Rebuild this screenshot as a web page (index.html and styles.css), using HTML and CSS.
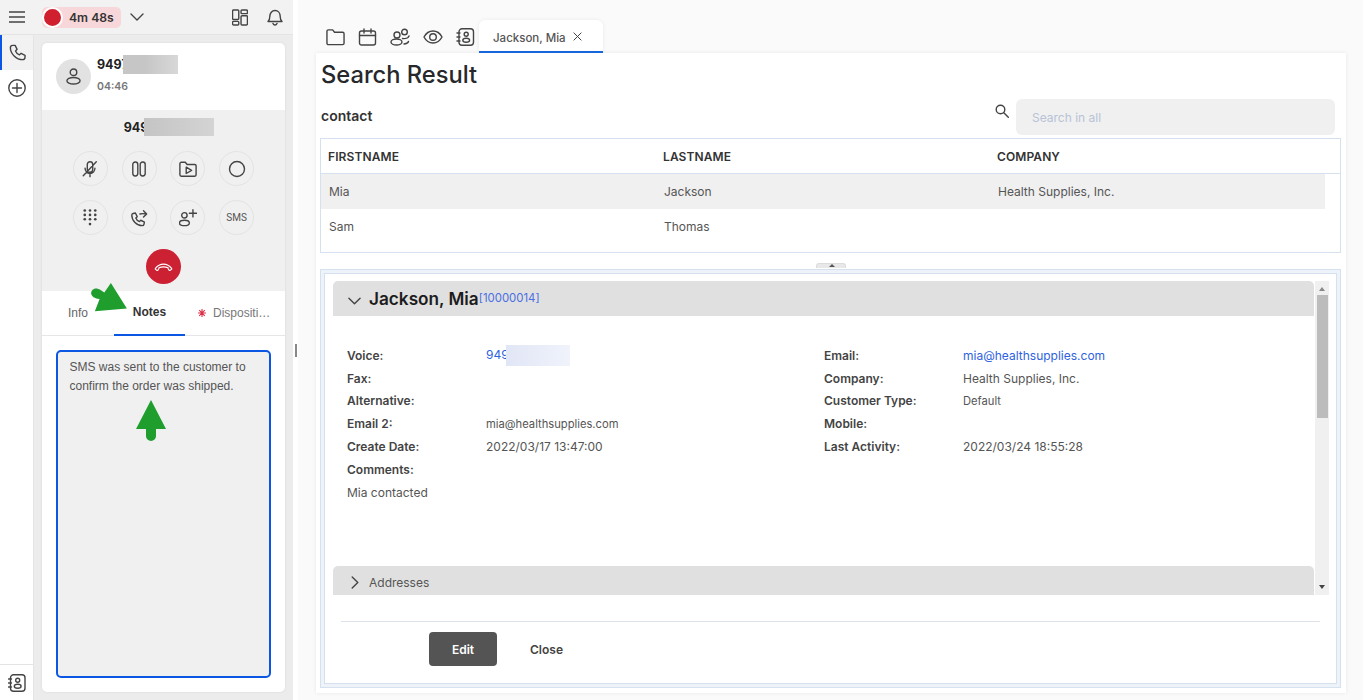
FILE: index.html
```html
<!DOCTYPE html>
<html lang="en">
<head>
<meta charset="utf-8">
<title>Search Result</title>
<link rel="stylesheet" href="styles.css">
</head>
<body>
<div class="app">
  <aside class="left">
    <header class="topbar">
      <svg class="ic menu" viewBox="0 0 16 12"><path d="M0 1h16M0 6h16M0 11h16"/></svg>
      <div class="timer"><span class="rec"></span><span class="timer-text">4m 48s</span></div>
      <svg class="ic chev" viewBox="0 0 14 8"><path d="M1 1l6 6 6-6"/></svg>
      <span class="spacer"></span>
      <svg class="ic layout" viewBox="0 0 17 17"><rect x=".6" y=".6" width="6.6" height="10" rx="1"/><rect x=".6" y="12.6" width="6.6" height="3.8" rx="1"/><rect x="9.6" y=".6" width="6.8" height="3.8" rx="1"/><rect x="9.6" y="6.6" width="6.8" height="9.8" rx="1"/></svg>
      <svg class="ic bell" viewBox="0 0 16 17"><path d="M1 12.5c1.4-1.2 1.8-2.5 1.8-5C2.8 4 5 1.5 8 1.5s5.200 2.500 5.200 6c0 2.500.4 3.800 1.800 5zM6 14.500c.4 1 1.100 1.500 2 1.500s1.600-.5 2-1.500"/></svg>
    </header>
    <div class="leftbody">
      <nav class="rail">
        <div class="rail-item active">
          <svg class="ic phone" viewBox="0 0 24 24"><path d="M6 3l3 0 2.500 5-2 2c.8 2.200 2.800 4.200 5 5l2-2 5 2.500 0 2.500c0 2-1.500 3-3 3C10.500 21 3 13.500 3 6c0-1.500 1-3 3-3z"/></svg>
        </div>
        <div class="rail-item">
          <svg class="ic plus" viewBox="0 0 18 18"><circle cx="9" cy="9" r="8.200"/><path d="M9 4.500v9M4.500 9h9"/></svg>
        </div>
        <span class="spacer"></span>
        <div class="rail-foot">
          <svg class="ic book" viewBox="0 0 18 18"><rect x="2.500" y=".8" width="14.500" height="16.400" rx="3"/><circle cx="9.700" cy="6.300" r="2"/><ellipse cx="9.700" cy="12.300" rx="3.400" ry="2"/><path d="M.5 5h3M.5 9h3M.5 13h3"/></svg>
        </div>
      </nav>
      <div class="gutter">
        <section class="card">
          <div class="caller">
            <div class="avatar">
              <svg class="ic" viewBox="0 0 16 18"><circle cx="8" cy="4.500" r="3.500"/><ellipse cx="8" cy="13.500" rx="7" ry="3.500"/></svg>
            </div>
            <div class="caller-info">
              <div class="caller-num">9497<span class="blur blur-a"></span></div>
              <div class="caller-time">04:46</div>
            </div>
          </div>
          <div class="controls">
            <div class="dial-num">949<span class="blur blur-b"></span></div>
            <div class="btn-grid">
              <button class="round"><svg class="ic" viewBox="0 0 20 20"><path d="M7 5a3 3 0 0 1 6 0v5.500a3 3 0 0 1-6 0zM4.500 9c0 3.500 2.500 6 5.500 6s5.500-2.500 5.500-6M10 15v3.500M2.500 17.500L17 2"/></svg></button>
              <button class="round"><svg class="ic" viewBox="-1 -1 18 18"><rect x="1.800" y="1" width="5" height="14" rx="2.400"/><rect x="9.200" y="1" width="5" height="14" rx="2.400"/></svg></button>
              <button class="round"><svg class="ic" viewBox="0 0 20 18"><path d="M1 3a1.500 1.500 0 0 1 1.500-1.500h4.500l2 2.500h8.500A1.500 1.500 0 0 1 19 5.500v10a1.500 1.500 0 0 1-1.500 1.500h-15A1.500 1.500 0 0 1 1 15.500zM8 7l6 3.500-6 3.500z"/></svg></button>
              <button class="round"><svg class="ic" viewBox="0 0 18 18"><circle cx="9" cy="9" r="7.500"/></svg></button>
              <button class="round"><svg class="dots" viewBox="0 0 16 20"><g><circle cx="2" cy="2" r="1.500"/><circle cx="8" cy="2" r="1.500"/><circle cx="14" cy="2" r="1.500"/><circle cx="2" cy="7" r="1.500"/><circle cx="8" cy="7" r="1.500"/><circle cx="14" cy="7" r="1.500"/><circle cx="2" cy="12" r="1.500"/><circle cx="8" cy="12" r="1.500"/><circle cx="14" cy="12" r="1.500"/><circle cx="8" cy="17.500" r="1.500"/></g></svg></button>
              <button class="round"><svg class="ic" viewBox="0 0 20 20"><path d="M3.500 5l2.500-.5 2 4-1.500 1.500c.6 1.700 2.300 3.400 4 4l1.500-1.500 4 2-.5 2.500c-.2 1-1 1.500-2 1.500C7.500 18.500 2 13 2 7c0-1 .5-1.800 1.500-2zM11 5.500c2-.5 4-.5 7 0M15 2l3.500 3.500L15 9"/></svg></button>
              <button class="round"><svg class="ic" viewBox="0 0 20 20"><circle cx="6" cy="7" r="3"/><ellipse cx="6" cy="15.500" rx="5.500" ry="3"/><path d="M15.500 .8v8M11.500 4.800h8"/></svg></button>
              <button class="round sms">SMS</button>
            </div>
            <button class="hangup"><svg viewBox="0 0 20 10"><path d="M1.500 6.500C4 3.200 7 2 10 2s6 1.200 8.500 4.500c.3.400.2.800-.1 1l-1.400 1c-.4.300-.8.200-1.100-.2l-1-1.500c-.2-.3-.2-.6-.1-1-3-1.200-6.600-1.200-9.600 0 .1.400.1.700-.1 1l-1 1.500c-.3.400-.7.500-1.100.2l-1.400-1c-.3-.2-.4-.6-.1-1z"/></svg></button>
          </div>
          <div class="tabs">
            <div class="tab">Info</div>
            <div class="tab on">Notes</div>
            <div class="tab disp"><svg class="req" viewBox="0 0 8 8"><path d="M4 0v8M0 4h8M1.200 1.200l5.600 5.600M6.800 1.200l-5.600 5.600"/></svg><span class="disp-text">Dispositi…</span></div>
          </div>
          <div class="notes-wrap">
            <div class="notes">SMS was sent to the customer to confirm the order was shipped.</div>
          </div>
          <svg class="arrow arrow-a" viewBox="0 0 40 34"><path d="M22 0L39 27 5 30 10 17C5 17 1 14 1 11 1 7 5 5 8 6 11 7 14 9 15 10z"/></svg>
          <svg class="arrow arrow-b" viewBox="0 0 30 42"><path d="M15 0L30 29H20V36A5 5 0 0 1 10 36V29H0z"/></svg>
        </section>
      </div>
    </div>
  </aside>

  <div class="split"><span class="grip"></span></div>

  <main class="main">
    <div class="tabbar">
      <svg class="ic t" viewBox="0 0 20 18"><path d="M1 3a1.500 1.500 0 0 1 1.500-1.500h4.500l2 2.500h8.500A1.500 1.500 0 0 1 19 5.500v10a1.500 1.500 0 0 1-1.500 1.500h-15A1.500 1.500 0 0 1 1 15.500z"/></svg>
      <svg class="ic t" viewBox="0 0 18 18"><rect x="1" y="3" width="16" height="14" rx="2"/><path d="M1 7.500h16M5.500 1v4M12.500 1v4"/></svg>
      <svg class="ic t wide" viewBox="0 0 20 18"><circle cx="7" cy="7" r="3"/><ellipse cx="6.500" cy="14" rx="5.500" ry="3"/><circle cx="14.500" cy="4" r="2.800"/><path d="M12.500 10.500c3 .5 6-.5 6.500-2.500M14 16c2-.2 4-1 4.500-2.500"/></svg>
      <svg class="ic t wide" viewBox="0 0 20 14"><path d="M1 7c2-3.800 5.500-6 9-6s7 2.200 9 6c-2 3.800-5.500 6-9 6s-7-2.200-9-6z"/><circle cx="10" cy="7" r="3.300"/></svg>
      <svg class="ic t" viewBox="0 0 18 18"><rect x="2.500" y=".8" width="14.500" height="16.400" rx="3"/><circle cx="9.700" cy="6.300" r="2"/><ellipse cx="9.700" cy="12.300" rx="3.400" ry="2"/><path d="M.5 5h3M.5 9h3M.5 13h3"/></svg>
      <div class="doc-tab"><span>Jackson, Mia</span><svg class="ic x" viewBox="0 0 10 10"><path d="M1 1l8 8M9 1l-8 8"/></svg></div>
    </div>
    <div class="sheet">
      <h1 class="title">Search Result</h1>
      <div class="search-row">
        <h2 class="sub">contact</h2>
        <svg class="ic mag" viewBox="0 0 14 14"><circle cx="5.500" cy="5.500" r="4.300"/><path d="M8.800 8.800l4.500 4.500"/></svg>
        <div class="searchbox">Search in all</div>
      </div>
      <div class="grid">
        <div class="grid-head"><span>FIRSTNAME</span><span>LASTNAME</span><span>COMPANY</span></div>
        <div class="grid-row sel"><span>Mia</span><span>Jackson</span><span>Health Supplies, Inc.</span></div>
        <div class="grid-row"><span>Sam</span><span>Thomas</span><span></span></div>
      </div>
      <div class="collapse"><span class="collapse-tab"></span></div>
      <div class="detail">
        <div class="detail-inner">
          <div class="scrollarea">
            <div class="sections">
              <div class="sec-head">
                <svg class="ic sec-chev" viewBox="0 0 14 8"><path d="M1 1l6 6 6-6"/></svg>
                <span class="sec-name">Jackson, Mia</span><span class="sec-id">[10000014]</span>
              </div>
              <div class="fields">
                <div class="col">
                  <div class="f"><b>Voice:</b><span class="link">949<span class="blur blur-c"></span></span></div>
                  <div class="f"><b>Fax:</b></div>
                  <div class="f"><b>Alternative:</b></div>
                  <div class="f"><b>Email 2:</b><span class="small">mia@healthsupplies.com</span></div>
                  <div class="f"><b>Create Date:</b><span>2022/03/17 13:47:00</span></div>
                  <div class="f"><b>Comments:</b></div>
                  <div class="comment">Mia contacted</div>
                </div>
                <div class="col">
                  <div class="f"><b>Email:</b><span class="link">mia@healthsupplies.com</span></div>
                  <div class="f"><b>Company:</b><span>Health Supplies, Inc.</span></div>
                  <div class="f"><b>Customer Type:</b><span class="small">Default</span></div>
                  <div class="f"><b>Mobile:</b></div>
                  <div class="f"><b>Last Activity:</b><span>2022/03/24 18:55:28</span></div>
                </div>
              </div>
              <div class="sec-head closed">
                <svg class="ic sec-chev right" viewBox="0 0 8 14"><path d="M1 1l6 6-6 6"/></svg>
                <span>Addresses</span>
              </div>
            </div>
            <div class="scrollbar"><i class="up"></i><i class="thumb"></i><span class="spacer"></span><i class="down"></i></div>
          </div>
          <div class="actions">
            <button class="edit">Edit</button>
            <button class="close">Close</button>
          </div>
        </div>
      </div>
    </div>
  </main>
</div>
</body>
</html>
```
FILE: styles.css
```css
* { box-sizing: border-box; }
html, body { margin: 0; height: 100%; overflow: hidden; }
body { font-family: Inter, "Liberation Sans", sans-serif; font-size: 12px; color: #555; background: #fafafa; }
.app { display: flex; height: 700px; }
.spacer { flex: 1; }
.ic { fill: none; stroke: #444; stroke-width: 1.4px; stroke-linecap: round; stroke-linejoin: round; display: block; }
.ic * { vector-effect: non-scaling-stroke; }
button { font: inherit; border: 0; padding: 0; cursor: pointer; }

.left { width: 293px; flex: none; display: flex; flex-direction: column; background: #f0f0f0; }
.topbar { height: 35px; flex: none; display: flex; align-items: center; padding: 0 10px 0 9px; background: #f2f2f2; border-bottom: 1px solid #e4e4e4; }
.menu { width: 16px; height: 12px; margin-right: 17px; }
.timer { display: flex; align-items: center; height: 21px; width: 79px; background: #f8d7da; border-radius: 5px; }
.rec { width: 21px; height: 21px; border-radius: 50%; background: #d0202f; border: 2px solid #fff; flex: none; }
.timer-text { font-size: 12.200px; font-weight: 600; color: #333; margin-left: 6px; white-space: nowrap; }
.chev { width: 14px; height: 8px; margin-left: 9px; }
.layout { width: 16px; height: 17px; margin-right: 19px; }
.bell { width: 16px; height: 17px; }

.leftbody { flex: 1; display: flex; min-height: 0; }
.rail { width: 34px; flex: none; background: #fff; display: flex; flex-direction: column; border-right: 1px solid #e4e4e4; }
.rail-item { height: 35px; display: flex; align-items: center; justify-content: center; }
.rail-item.active { border-left: 2px solid #0b57e3; background: #f2f2f2; }
.phone { width: 19px; height: 19px; }
.plus { width: 18px; height: 18px; }
.rail-foot { height: 36px; border-top: 1px solid #e4e4e4; display: flex; align-items: center; justify-content: center; }
.book { width: 18px; height: 18px; }

.gutter { flex: 1; padding: 8px; background: #ececec; min-width: 0; }
.card { position: relative; height: 649px; background: #fff; border-radius: 5px; box-shadow: 0 0 3px rgba(0,0,0,.08); display: flex; flex-direction: column; overflow: hidden; }
.caller { height: 67px; flex: none; display: flex; align-items: center; padding: 0 14px; gap: 6px; }
.avatar { width: 35px; height: 35px; border-radius: 50%; background: #e2e2e2; display: flex; align-items: center; justify-content: center; }
.avatar .ic { width: 15px; height: 17px; }
.caller-info { display: flex; flex-direction: column; margin-top: -6px; }
.caller-num { font-size: 12.500px; font-weight: 700; color: #222; display: flex; align-items: center; height: 20px; }
.caller-time { font-size: 10.500px; font-weight: 600; color: #777; margin-top: 5px; line-height: 13px; }
.blur { display: inline-block; }
.blur-a { width: 55px; height: 19px; background: linear-gradient(90deg, #c6c6c6, #c6c6c6 40%, #d8d8d8); margin-left: -6px; }
.blur-b { width: 70px; height: 18px; background: linear-gradient(90deg, #c4c4c4, #d4d4d4); margin-left: -4px; }
.blur-c { width: 64px; height: 21px; background: linear-gradient(90deg, #e1e6f6, #f0f3fb); vertical-align: middle; margin-left: -3px; }

.controls { height: 181px; flex: none; background: #f0f0f0; display: flex; flex-direction: column; align-items: center; }
.dial-num { font-size: 12.500px; font-weight: 700; color: #222; height: 18px; margin: 8px 0 0 11px; display: flex; align-items: center; }
.btn-grid { display: grid; grid-template-columns: repeat(4, 35px); gap: 14px 13.700px; margin-top: 15px; }
.round { width: 35px; height: 35px; border-radius: 50%; background: #f0f0f0; border: 1px solid #e3e3e3; display: flex; align-items: center; justify-content: center; }
.round .ic { width: 18px; height: 18px; }
.dots { width: 14px; height: 19px; fill: #444; }
.sms { font-family: Roboto, "Liberation Sans", sans-serif; font-size: 10px; font-weight: 400; color: #555; }
.hangup { width: 35px; height: 35px; border-radius: 50%; background: #cc2033; margin-top: 14px; display: flex; align-items: center; justify-content: center; }
.hangup svg { width: 19px; height: 10px; fill: none; stroke: #fff; stroke-width: 1.200; stroke-linejoin: round; }

.tabs { height: 45px; flex: none; display: flex; border-bottom: 1px solid #e6e6e6; font-family: "Liberation Sans", Arial, sans-serif; }
.tab { height: 44px; padding-bottom: 1px; display: flex; align-items: center; justify-content: center; font-size: 12px; color: #666; white-space: nowrap; }
.tab:first-child { width: 72px; }
.tab.on { width: 71px; font-weight: 700; color: #333; border-bottom: 2px solid #0b57e3; height: 45px; }
.tab.disp { flex: 1; gap: 7px; justify-content: flex-start; padding-left: 13px; }
.req { width: 8px; height: 8px; stroke: #d9304a; stroke-width: 1.100; flex: none; }
.disp-text { color: #777; }
.notes-wrap { flex: 1; padding: 14px; min-height: 0; }
.notes { height: 100%; border: 2px solid #0b57e3; border-radius: 5px; background: #f0f0f0; padding: 6px 11.500px; font-family: "Liberation Sans", Arial, sans-serif; font-size: 12px; line-height: 19px; color: #555; }
.arrow { position: absolute; fill: #1f9e2e; }
.arrow-a { left: 48px; top: 240px; width: 38px; height: 32px; }
.arrow-b { left: 94px; top: 357px; width: 30px; height: 42px; }

.split { width: 5px; flex: none; background: #fff; position: relative; }
.grip { position: absolute; left: 2px; top: 344px; width: 2px; height: 13px; background: #888; }

.main { flex: 1; min-width: 0; padding: 20px 17px 7px 18px; display: flex; flex-direction: column; }
.tabbar { height: 33px; flex: none; display: flex; align-items: center; gap: 13px; padding-left: 10px; }
.t { width: 19px; height: 18px; margin-top: 1px; }
.wide { width: 20px; }
.doc-tab { align-self: stretch; margin-left: -9px; width: 124px; background: #fff; border-radius: 6px 6px 0 0; border-bottom: 2px solid #1769e0; box-shadow: 0 0 4px rgba(0,0,0,.07); display: flex; align-items: center; padding: 4px 0 0 14px; font-size: 11.500px; font-weight: 500; color: #555; gap: 7px; }
.x { width: 9px; height: 9px; stroke-width: 1px; margin-top: -3px; }

.sheet { flex: 1; min-height: 0; background: #fff; box-shadow: 0 0 4px rgba(0,0,0,.08); padding: 0 5px 5px 4px; display: flex; flex-direction: column; }
.title { margin: 6px 0 0; font-size: 23.700px; font-weight: 500; line-height: 32px; color: #26282b; padding-left: 1px; }
.search-row { height: 36px; flex: none; display: flex; align-items: center; padding-right: 6px; margin-top: 8px; }
.sub { margin: 0 auto 4px 1px; font-size: 14px; font-weight: 600; color: #333; }
.mag { width: 14px; height: 14px; margin: -12px 7px 0 0; }
.searchbox { width: 319px; height: 36px; background: #f0f0f0; border-radius: 6px; padding: 0 16px; display: flex; align-items: center; font-size: 12px; color: #b7c3d6; }
.grid { height: 115px; flex: none; border: 1px solid #d5e1ee; margin-top: 3px; }
.grid-head, .grid-row { display: grid; grid-template-columns: 335px 334px 1fr; align-items: center; }
.grid-head { height: 35px; border-bottom: 1px solid #d5e1ee; font-size: 12px; font-weight: 600; color: #333; letter-spacing: .1px; }
.grid-head span { padding-left: 7px; }
.grid-row { height: 35px; margin-right: 15px; color: #555; }
.grid-row span { padding-left: 8px; }
.sel { background: #f0f0f0; }
.collapse { height: 16px; flex: none; display: flex; justify-content: center; align-items: flex-end; }
.collapse-tab { position: relative; width: 30px; height: 5px; background: #e8e8e8; border: 1px solid #dcdcdc; border-bottom: 0; border-radius: 3px 3px 0 0; margin-bottom: 1px; }
.collapse-tab::after { content: ""; position: absolute; left: 12px; top: 0; border-left: 3px solid transparent; border-right: 3px solid transparent; border-bottom: 3px solid #555; }
.detail { flex: 1; min-height: 0; border: 1px solid #d5e1ee; padding: 3px; background: #eef3f9; }
.detail-inner { height: 100%; background: #fff; border: 1px solid #d5e1ee; padding: 7px 7px 0 8px; display: flex; flex-direction: column; }
.scrollarea { height: 314px; flex: none; display: flex; gap: 1px; overflow: hidden; }
.sections { flex: 1; min-width: 0; display: flex; flex-direction: column; }
.sec-head { height: 35px; flex: none; background: #e0e0e0; border-radius: 5px 5px 0 0; display: flex; align-items: center; padding-left: 15px; }
.sec-chev { width: 13px; height: 8px; margin: 4px 8px 0 0; }
.sec-chev.right { width: 8px; height: 13px; margin: 0 10px 0 3px; }
.sec-name { font-size: 17.200px; font-weight: 600; color: #1c1c1c; }
.sec-id { font-size: 11.400px; color: #4a6fe3; margin-top: -1px; }
.closed { margin-top: auto; height: 29px; padding-top: 3px; font-size: 12px; color: #555; }
.fields { display: grid; grid-template-columns: 477px 1fr; padding: 28px 0 0 14px; flex: 1; }
.f { display: flex; height: 22.800px; align-items: center; }
.f b { width: 139px; flex: none; font-weight: 600; font-size: 12px; color: #444; }
.f span { color: #555; }
.f .link { color: #2e62e0; }
.f .small { font-size: 11.200px; }
.comment { height: 23px; display: flex; align-items: center; }
.scrollbar { width: 14px; flex: none; background: #f0f0f0; display: flex; flex-direction: column; align-items: center; padding: 6px 0; }
.up, .down { width: 0; height: 0; border-left: 3px solid transparent; border-right: 3px solid transparent; }
.up { border-bottom: 4px solid #888; }
.down { border-top: 4px solid #444; }
.thumb { width: 11px; height: 123px; background: #bcbcbc; margin-top: 4px; }
.actions { margin: 26px 9px 0 8px; border-top: 1px solid #dde1ea; padding: 10px 0 0 88px; display: flex; align-items: center; gap: 33px; }
.edit { width: 68px; height: 34px; border-radius: 4px; background: #545454; color: #fff; font-size: 12px; font-weight: 600; }
.close { background: none; font-size: 12px; font-weight: 600; color: #444; }
```
